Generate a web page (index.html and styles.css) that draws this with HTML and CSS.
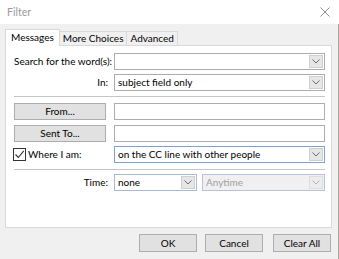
FILE: index.html
```html
<!DOCTYPE html>
<html>
<head>
<meta charset="utf-8">
<link rel="stylesheet" href="styles.css">
</head>
<body>
<div class="window">
  <div class="titlebar">
    <span class="title">Filter</span>
    <svg class="close" width="10" height="10" viewBox="0 0 10 10"><path d="M0.5 0.5 L9.5 9.5 M9.5 0.5 L0.5 9.5" stroke="#8a8a8a" stroke-width="1" fill="none"/></svg>
  </div>
  <div class="body">
    <div class="tabs">
      <div class="tab active">Messages</div>
      <div class="tab">More Choices</div>
      <div class="tab">Advanced</div>
    </div>
    <div class="panel">
      <div class="row r1">
        <label class="lbl">Search for the word(s):</label>
        <div class="combo"><span class="val"></span><span class="arrow"><svg width="8" height="5" viewBox="0 0 8 5"><path d="M0.5 0.5 L4 4 L7.5 0.5" stroke="#6d6d6d" fill="none"/></svg></span></div>
      </div>
      <div class="row r2">
        <label class="lbl right">In:</label>
        <div class="combo"><span class="val">subject field only</span><span class="arrow"><svg width="8" height="5" viewBox="0 0 8 5"><path d="M0.5 0.5 L4 4 L7.5 0.5" stroke="#6d6d6d" fill="none"/></svg></span></div>
      </div>
      <div class="sep s1"></div>
      <div class="row r3">
        <button class="btn">From...</button>
        <div class="input"></div>
      </div>
      <div class="row r4">
        <button class="btn">Sent To...</button>
        <div class="input"></div>
      </div>
      <div class="row r5">
        <label class="lbl chk"><span class="box"><svg width="11" height="11" viewBox="0 0 11 11"><path d="M1.5 5.5 L4.3 8.5 L9.8 1.8" stroke="#333" stroke-width="1.1" fill="none"/></svg></span>Where I am:</label>
        <div class="combo focus"><span class="val">on the CC line with other people</span><span class="arrow"><svg width="8" height="5" viewBox="0 0 8 5"><path d="M0.5 0.5 L4 4 L7.5 0.5" stroke="#6d6d6d" fill="none"/></svg></span></div>
      </div>
      <div class="sep s2"></div>
      <div class="row r6">
        <label class="lbl right">Time:</label>
        <div class="timebox">
          <div class="combo blue small"><span class="val">none</span><span class="arrow"><svg width="8" height="5" viewBox="0 0 8 5"><path d="M0.5 0.5 L4 4 L7.5 0.5" stroke="#6d6d6d" fill="none"/></svg></span></div>
          <div class="combo disabled"><span class="val">Anytime</span><span class="arrow"><svg width="8" height="5" viewBox="0 0 8 5"><path d="M0.5 0.5 L4 4 L7.5 0.5" stroke="#b5b5b5" fill="none"/></svg></span></div>
        </div>
      </div>
    </div>
    <div class="buttons">
      <button class="btn dlg ok">OK</button>
      <button class="btn dlg cancel">Cancel</button>
      <button class="btn dlg clear">Clear All</button>
    </div>
  </div>
</div>
</body>
</html>
```
FILE: styles.css
```css
* { box-sizing: border-box; }
html, body { margin: 0; padding: 0; }
body {
  width: 339px;
  height: 259px;
  background: #f0f0f0;
  font-family: "Lato", "Noto Sans", sans-serif;
  font-size: 10px;
  color: #000;
  overflow: hidden;
}
.window { width: 339px; height: 259px; display: flex; flex-direction: column; }
.titlebar {
  height: 24px;
  background: #fff;
  display: flex;
  align-items: center;
  justify-content: space-between;
  padding: 0 9px 1px 7px;
  flex: none;
}
.title { color: #9a9a9a; font-size: 10.5px; }
.close { display: block; }
.body {
  flex: 1;
  border-right: 1px solid #a8a49c;
  padding: 5px 6px 0 5px;
}
.tabs { display: flex; align-items: flex-end; height: 16px; }
.tab {
  height: 14px;
  padding: 0 3px;
  border: 1px solid #d9d9d9;
  border-bottom: none;
  background: #f0f0f0;
  line-height: 13px;
  margin-left: -1px;
}
.tab.active {
  height: 17px;
  background: #fff;
  margin-left: 0;
  padding: 0 5px;
  line-height: 15px;
  position: relative;
  z-index: 1;
  margin-bottom: -1px;
}
.panel {
  height: 183px;
  background: #fff;
  border: 1px solid #d9d9d9;
  padding: 7px 6px 0 8px;
  display: flex;
  flex-direction: column;
}
.row {
  display: grid;
  grid-template-columns: 94px 1fr;
  column-gap: 6px;
  height: 17px;
  align-items: center;
}
.r2 { margin-top: 4px; }
.s1 { margin-top: 5px; }
.r3 { margin-top: 5px; }
.r4 { margin-top: 5px; }
.r5 { margin-top: 4px; }
.s2 { margin-top: 6px; }
.r6 { margin-top: 3px; }
.r3 .btn, .r4 .btn { width: 92px; }
.sep {
  height: 2px;
  border-top: 1px solid #a0a0a0;
  border-bottom: 1px solid #fff;
  flex: none;
  opacity: 0.6;
}
.lbl { white-space: nowrap; line-height: 17px; }
.lbl.right { text-align: right; padding-right: 0; }
.chk { display: flex; align-items: center; margin-left: -1px; }
.box {
  width: 13px;
  height: 13px;
  border: 1px solid #333;
  background: #fff;
  margin-right: 2px;
  display: flex;
  align-items: center;
  justify-content: center;
}
.box svg { display: block; }
.combo, .input {
  height: 17px;
  border: 1px solid #adadad;
  background: #fff;
  display: flex;
  align-items: center;
}
.combo .val { flex: 1; padding-left: 3px; white-space: nowrap; overflow: hidden; line-height: 15px; }
.arrow {
  width: 14px;
  height: 13px;
  margin-right: 1px;
  background: #e6e6e6;
  border: 1px solid #cfcfcf;
  display: flex;
  align-items: center;
  justify-content: center;
}
.arrow svg { display: block; }
.combo.focus { border-color: #7da2ce; }
.combo.blue { border-color: #a7b9d3; }
.timebox { display: grid; grid-template-columns: 83px 1fr; column-gap: 5px; }
.combo.disabled { background: #f0f0f0; border-color: #b8c4d6; color: #a0a0a0; }
.combo.disabled .arrow { background: #ececec; border-color: #dedede; }
.btn {
  font-family: inherit;
  font-size: 10px;
  color: #000;
  height: 17px;
  background: #e1e1e1;
  border: 1px solid #adadad;
  padding: 0;
  line-height: 15px;
  margin: 0;
}
.buttons {
  display: flex;
  justify-content: flex-end;
  padding-top: 6px;
  padding-right: 1px;
}
.btn.dlg { width: 58px; height: 18px; }
.cancel { margin-left: 8px; }
.clear { margin-left: 10px; }
```
